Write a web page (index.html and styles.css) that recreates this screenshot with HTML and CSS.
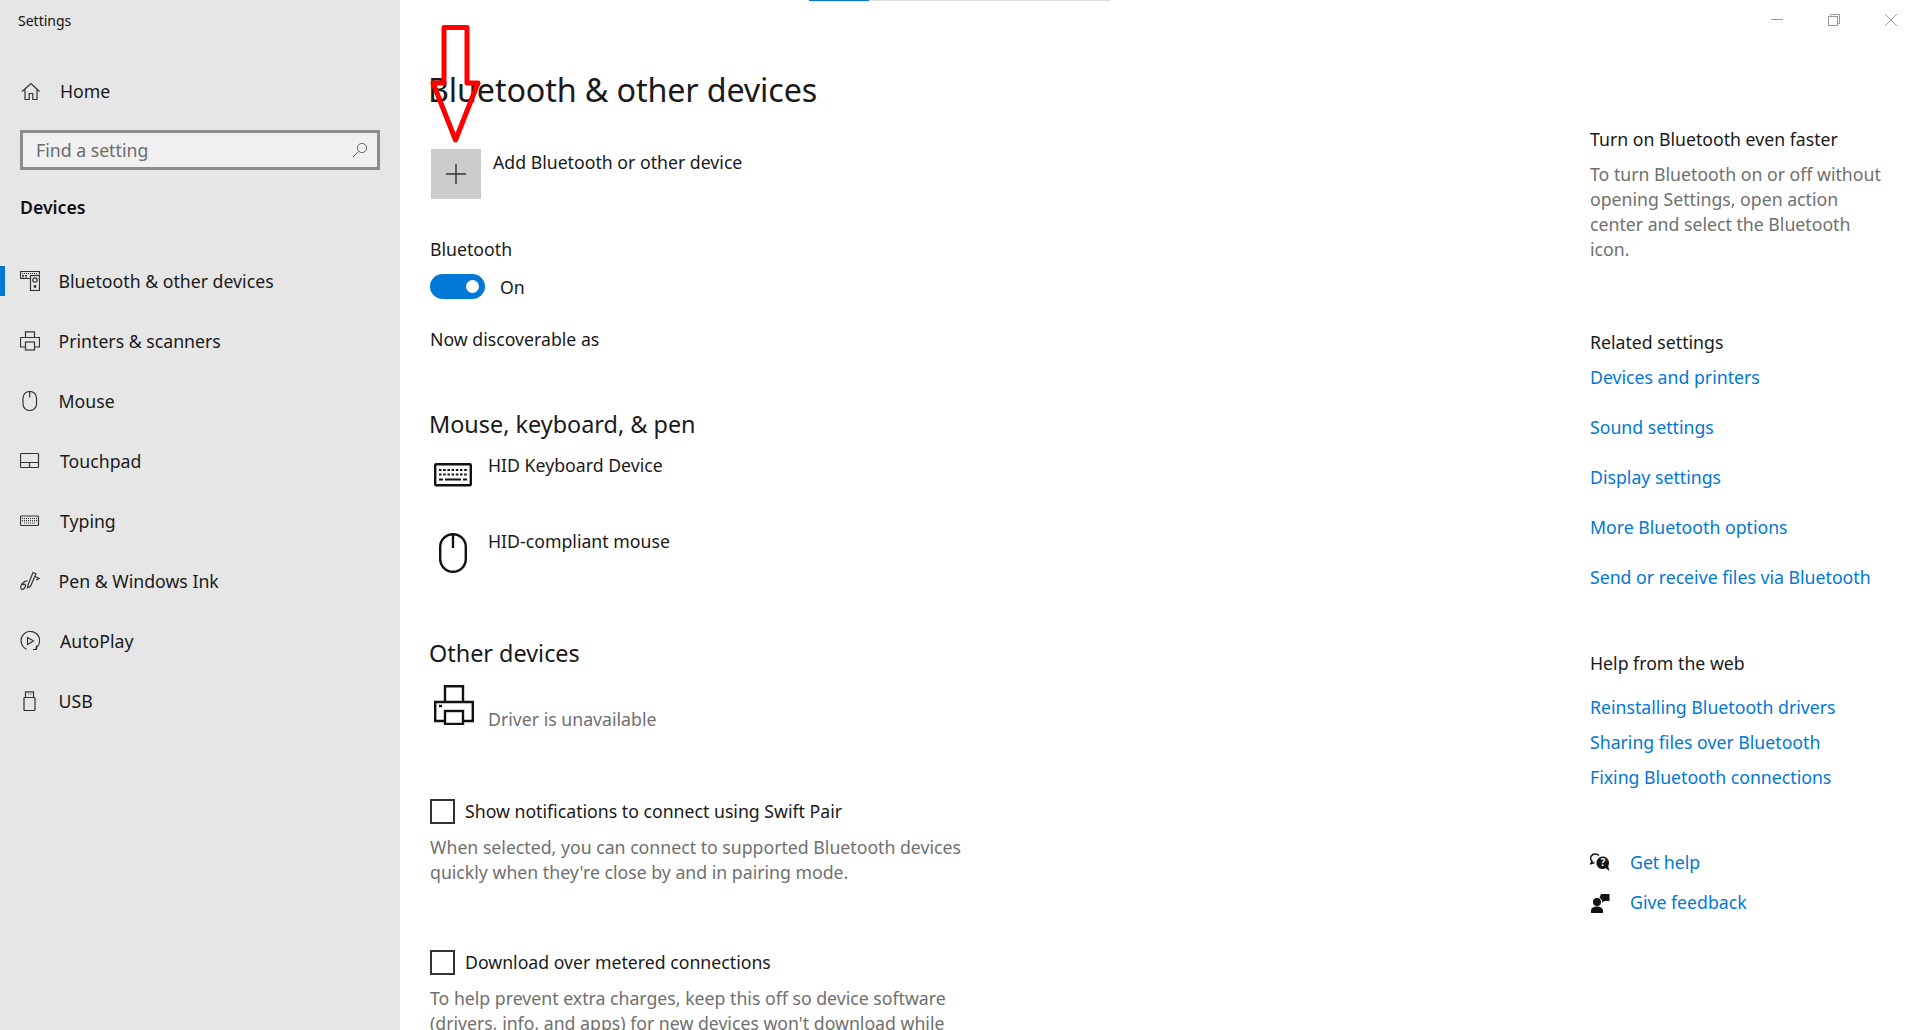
FILE: index.html
```html
<!DOCTYPE html>
<html lang="en">
<head>
<meta charset="utf-8">
<title>Settings</title>
<link rel="stylesheet" href="styles.css">
</head>
<body>
<div class="app">
  <aside class="sidebar">
    <div class="app-title">Settings</div>
    <div class="home-row">
      <svg class="nav-icon" viewBox="0 0 20 20"><path d="M2 10.500 11 2.500l8.500 8M5 8.500V18.500h4.200v-6h3.600v6H17V8.500"/></svg>
      <span class="home-label">Home</span>
    </div>
    <div class="search">
      <span>Find a setting</span>
      <svg class="search-icon" viewBox="0 0 16 16"><circle cx="10" cy="6" r="4.6"/><path d="M6.600 9.400 1 15"/></svg>
    </div>
    <div class="group-label">Devices</div>
    <nav class="nav">
      <div class="nav-item"><span class="accent"></span>
        <svg class="nav-icon" viewBox="0 0 20 20"><path d="M10 7.500H.5V.5h19v3M2 2.500h1M4 2.500h1M6 2.500h1M8 2.500h1M10 2.500h1M12 2.500h1M14 2.500h1M16 2.500h1M2 4.500h2M5 4.500h2M2 6h2M5 6h2"/><rect x="10.500" y="4.500" width="9" height="15"/><circle cx="15" cy="9" r="2.200"/><circle cx="15" cy="15.500" r="1.400" class="solid"/></svg>
        <span class="nav-label">Bluetooth &amp; other devices</span></div>
      <div class="nav-item"><span class="no-accent"></span>
        <svg class="nav-icon" viewBox="0 0 20 20"><path d="M5.500 6V.8h9V6M5.500 16H.5V6.500h19V16h-5"/><rect x="5.500" y="11" width="9" height="8"/></svg>
        <span class="nav-label">Printers &amp; scanners</span></div>
      <div class="nav-item"><span class="no-accent"></span>
        <svg class="nav-icon" viewBox="0 0 20 20"><rect x="3" y=".5" width="13.500" height="19" rx="6.500"/><path d="M9.700.5v6"/></svg>
        <span class="nav-label">Mouse</span></div>
      <div class="nav-item"><span class="no-accent"></span>
        <svg class="nav-icon" viewBox="0 0 20 20"><rect x=".5" y="2.500" width="18" height="14" rx=".8"/><path d="M.5 11.500h18M9.500 11.500v5"/></svg>
        <span class="nav-label nav-label-wide">Touchpad</span></div>
      <div class="nav-item"><span class="no-accent"></span>
        <svg class="nav-icon" viewBox="0 0 20 20"><rect x=".5" y="5" width="18" height="9.500" rx=".8"/><path class="dots" d="M2 7.500h15M2 9.700h15M4 12h11"/></svg>
        <span class="nav-label nav-label-wide">Typing</span></div>
      <div class="nav-item"><span class="no-accent"></span>
        <svg class="nav-icon" viewBox="0 0 20 20"><path d="m8 14 5-12.500 3 1.300-5.500 12.500-3 1.500zM15 5.500l4 2-3 1.500M7.500 9.500C3 11 .5 14 .8 17c.3 2.500 3.500 1.500 4.500-1.500 1-2.300-1.300-3-2.800-1.500"/></svg>
        <span class="nav-label">Pen &amp; Windows Ink</span></div>
      <div class="nav-item"><span class="no-accent"></span>
        <svg class="nav-icon" viewBox="0 0 20 20"><path d="M6.500 18.200A9.300 9.300 0 1 1 15.500 17.500"/><path d="M13 18.500h3.500V14.500M7.500 6.500 13.500 10l-6 3.500z"/></svg>
        <span class="nav-label nav-label-wide">AutoPlay</span></div>
      <div class="nav-item"><span class="no-accent"></span>
        <svg class="nav-icon" viewBox="0 0 20 20"><rect x="4" y="6.500" width="11" height="13" rx=".8"/><path d="M5.500 6.500V.8h8v5.700M8 3h.8M10.500 3h.8"/></svg>
        <span class="nav-label">USB</span></div>
    </nav>
  </aside>

  <main class="content">
    <span class="progress"><span class="progress-fill"></span></span>
    <h1 class="page-title">Bluetooth &amp; other devices</h1>
    <svg class="annotation" viewBox="0 0 60 125"><path d="M14 6.500h23V62h11l-22.500 57L3 62h11z"/></svg>
    <div class="add-row">
      <span class="add-btn"><svg viewBox="0 0 20 20"><path d="M10 0v20M0 10h20"/></svg></span>
      <span class="body-text add-label">Add Bluetooth or other device</span>
    </div>
    <div class="body-text bt-label">Bluetooth</div>
    <div class="toggle-row">
      <span class="toggle"><span class="knob"></span></span>
      <span class="body-text on-label">On</span>
    </div>
    <div class="body-text discover">Now discoverable as</div>

    <h2 class="section-title mouse-title">Mouse, keyboard, &amp; pen</h2>
    <div class="device keyboard-row">
      <svg class="kbd-icon" viewBox="0 0 38 24"><rect x="1.200" y="1.200" width="35.600" height="21" rx="1"/><path class="dots-big" d="M5 7h28M5 11.500h28"/><path class="keys" d="M5 16.500h4M11 16.500h16M29 16.500h4"/></svg>
      <span class="body-text">HID Keyboard Device</span>
    </div>
    <div class="device mouse-row">
      <svg class="mouse-icon" viewBox="0 0 28 40"><rect x="1.200" y="1.200" width="25.600" height="37.600" rx="12.800"/><path d="M14 1v14"/></svg>
      <span class="body-text">HID-compliant mouse</span>
    </div>

    <h2 class="section-title">Other devices</h2>
    <div class="device printer-row">
      <svg class="printer-icon" viewBox="0 0 40 40"><path d="M11 17V1.200h18V17M11 36H1.200V17h37.600v19H29"/><rect x="11" y="26" width="18" height="13"/><path d="M5 21h3"/></svg>
      <span class="muted driver">Driver is unavailable</span>
    </div>

    <div class="check-row swift">
      <span class="check"></span>
      <span class="body-text">Show notifications to connect using Swift Pair</span>
    </div>
    <p class="muted desc">When selected, you can connect to supported Bluetooth devices<br>quickly when they're close by and in pairing mode.</p>

    <div class="check-row metered">
      <span class="check"></span>
      <span class="body-text">Download over metered connections</span>
    </div>
    <p class="muted desc">To help prevent extra charges, keep this off so device software<br>(drivers, info, and apps) for new devices won't download while</p>
  </main>

  <aside class="rail">
    <div class="win-controls">
      <svg viewBox="0 0 12 12"><path d="M0 5.500h12"/></svg>
      <svg viewBox="0 0 12 12"><rect x=".5" y="2.500" width="9" height="9"/><path d="M2.500 2.500V.5h9v9h-2"/></svg>
      <svg viewBox="0 0 12 12"><path d="m0 0 12 12M12 0 0 12"/></svg>
    </div>
    <div class="body-text rail-head first-head">Turn on Bluetooth even faster</div>
    <p class="muted tip">To turn Bluetooth on or off without<br>opening Settings, open action<br>center and select the Bluetooth<br>icon.</p>
    <div class="body-text rail-head related">Related settings</div>
    <div class="link-list spaced">
      <a class="link">Devices and printers</a>
      <a class="link">Sound settings</a>
      <a class="link">Display settings</a>
      <a class="link">More Bluetooth options</a>
      <a class="link">Send or receive files via Bluetooth</a>
    </div>
    <div class="body-text rail-head web">Help from the web</div>
    <div class="link-list tight">
      <a class="link">Reinstalling Bluetooth drivers</a>
      <a class="link">Sharing files over Bluetooth</a>
      <a class="link">Fixing Bluetooth connections</a>
    </div>
    <div class="help-list">
      <div class="help-row">
        <svg class="help-icon" viewBox="0 0 20 20"><path class="outline" d="M9 2.500C7 .5 3 .5 1.300 3c-1.300 2-.6 4 .9 5.200L.7 10.800l3.800-1.300"/><path d="M13 3.500a6.500 6.500 0 0 0-5.500 10c1.700 2.600 5.500 3.200 8.500 1.700l3.500 3-1.300-5A6.500 6.500 0 0 0 13 3.500z"/><text x="13" y="13" class="q">?</text></svg>
        <a class="link">Get help</a>
      </div>
      <div class="help-row">
        <svg class="help-icon" viewBox="0 0 20 20"><circle cx="7" cy="9" r="4"/><path d="M1 20v-2c0-3 2.500-4.500 6-4.500s6 1.500 6 4.500v2zM11 1h8.500v7H14l-2 2V7.500c-.8-1.600-1.600-2.400-2.500-2.800z"/></svg>
        <a class="link">Give feedback</a>
      </div>
    </div>
  </aside>
</div>
</body>
</html>
```

FILE: styles.css
```css
* { box-sizing: border-box; }
html, body { margin: 0; height: 100%; overflow: hidden; }
body { font-family: "Noto Sans", "Open Sans", sans-serif; font-size: 17.7px; color: #1a1a1a; background: #fff; }
.app { display: flex; height: 1030px; overflow: hidden; }

.sidebar { width: 400px; flex: none; background: #e6e6e6; }
.app-title { height: 42px; padding-left: 18px; font-size: 14px; line-height: 42px; color: #111; }
.home-row { display: flex; align-items: center; height: 40px; margin-top: 29px; padding-left: 20px; }
.home-label { margin-left: 20px; line-height: 25px; }
.search { display: flex; align-items: center; justify-content: space-between; width: 360px; height: 40px; margin: 19px 0 0 20px; padding: 0 9px 0 13px; border: 3px solid #8c8c8c; background: #f0f0f0; color: #6b6b6b; line-height: 25px; }
.search-icon { width: 16px; height: 16px; fill: none; stroke: #666; stroke-width: 1; }
.group-label { height: 25px; margin: 25px 0 0 20px; line-height: 25px; font-weight: 600; color: #111; }
.nav { margin-top: 31px; }
.nav-item { display: flex; align-items: center; height: 60px; }
.accent { width: 5px; height: 30px; background: #0078d7; margin-right: 15px; }
.no-accent { width: 20px; height: 30px; }
.nav-icon { width: 20px; height: 20px; flex: none; fill: none; stroke: #333; stroke-width: 1.2; }
.nav-icon .solid { fill: #333; stroke: none; }
.nav-icon .dots { stroke-dasharray: 1 1; }
.nav-label { margin-left: 18.500px; line-height: 25px; }
.nav-label-wide { margin-left: 20px; }

.content { position: relative; width: 1190px; flex: none; padding-left: 30px; }
.progress { position: absolute; left: 409px; top: 0; width: 301px; height: 1px; background: #ddd; }
.progress-fill { display: block; width: 60px; height: 1px; background: #0078d7; }
.page-title { margin: 69px 0 0 -2px; font-size: 32.300px; line-height: 40px; font-weight: 400; color: #1a1a1a; letter-spacing: -.15px; }
.annotation { position: absolute; left: 30px; top: 21px; width: 60px; height: 125px; fill: none; stroke: #f00; stroke-width: 5; stroke-linejoin: round; }
.add-row { display: flex; gap: 12px; margin: 40px 0 0 1px; }
.add-btn { display: flex; align-items: center; justify-content: center; width: 50px; height: 50px; background: #ccc; }
.add-btn svg { width: 20px; height: 20px; fill: none; stroke: #333; stroke-width: 1.4; }
.add-label { margin-top: 1px; }
.body-text { line-height: 25px; color: #1a1a1a; }
.bt-label { margin-top: 38px; }
.toggle-row { display: flex; align-items: center; gap: 15px; margin-top: 12px; height: 25px; }
.toggle { display: flex; align-items: center; justify-content: flex-end; width: 55px; height: 25px; padding-right: 6px; border-radius: 13px; background: #0078d7; }
.knob { width: 13px; height: 13px; border-radius: 50%; background: #fff; }
.on-label { padding-top: 2px; }
.discover { margin-top: 28px; }
.section-title { margin: 0 0 0 -1px; font-size: 23.400px; line-height: 30px; font-weight: 400; color: #1a1a1a; }
.mouse-title { margin-top: 57px; }
.device { display: grid; grid-template-columns: 58px auto; justify-content: start; }
.keyboard-row { margin-top: 14px; height: 76px; }
.mouse-row { height: 109px; }
.printer-row { height: 106px; }
.kbd-icon { width: 38px; height: 24px; margin: 10px 0 0 4px; fill: none; stroke: #111; stroke-width: 2.400; }
.kbd-icon .dots-big { stroke-width: 2.200; stroke-dasharray: 2.500 1.700; }
.kbd-icon .keys { stroke-width: 2.200; }
.mouse-icon { width: 28px; height: 40px; margin: 4px 0 0 9px; fill: none; stroke: #111; stroke-width: 2.400; }
.printer-icon { width: 40px; height: 40px; margin: 17px 0 0 4px; fill: none; stroke: #111; stroke-width: 2.400; }
.muted { color: #6f6f6f; line-height: 25px; }
.driver { margin-top: 39px; }
.check-row { display: flex; align-items: center; gap: 10px; height: 25px; }
.swift { margin-top: 25px; }
.metered { margin-top: 65px; }
.check { width: 25px; height: 25px; border: 2.500px solid #333; }
.desc { margin: 11px 0 0; }

.rail { flex: 1; min-width: 0; }
.win-controls { display: flex; gap: 45px; padding: 14px 0 0 181px; height: 26px; }
.win-controls svg { width: 12px; height: 12px; flex: none; fill: none; stroke: #999; stroke-width: 1; }
.rail-head { height: 25px; }
.first-head { margin-top: 101px; }
.tip { margin: 10px 0 0; }
.related { margin-top: 68px; }
.link { display: block; color: #0078d7; line-height: 25px; }
.link-list { display: flex; flex-direction: column; margin-top: 10px; }
.spaced { gap: 25px; }
.tight { gap: 10px; margin-top: 19px; }
.web { margin-top: 61px; }
.help-list { margin-top: 60px; display: flex; flex-direction: column; gap: 15px; }
.help-row { display: flex; align-items: center; gap: 20px; height: 25px; }
.help-icon { width: 20px; height: 20px; flex: none; fill: #111; }
.help-icon .outline { fill: none; stroke: #111; stroke-width: 1.4; }
.help-icon .q { fill: #fff; font-size: 10px; font-weight: 700; text-anchor: middle; font-family: "Noto Sans", sans-serif; }
```
